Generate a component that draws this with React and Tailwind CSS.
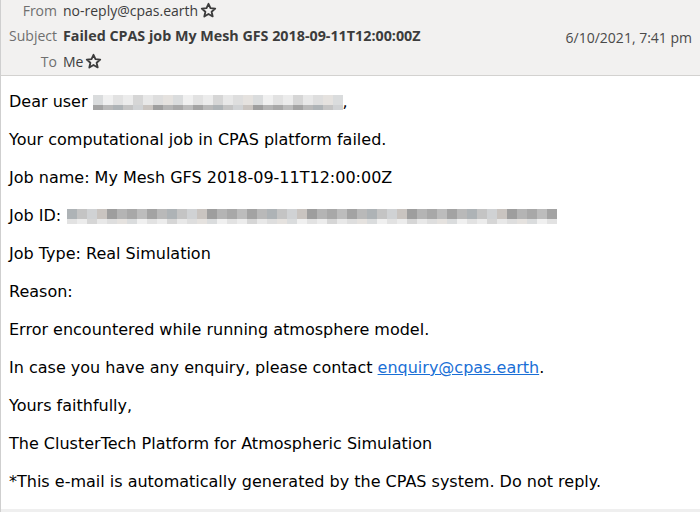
import React from "react";

// mosaic palette: class names written out in full
const dark = [
  "bg-[#b4b4b4]", "bg-[#a3a3a3]", "bg-[#c4c4c4]", "bg-[#9e9e9e]", "bg-[#bcbcbc]",
  "bg-[#aeb3b6]", "bg-[#c9c4c0]", "bg-[#a8a8a8]", "bg-[#b9b9b9]", "bg-[#d0d2d4]",
];
const light = [
  "bg-[#dedede]", "bg-[#e8e8e8]", "bg-[#d6d6d6]", "bg-[#ececec]", "bg-[#e2e2e2]",
  "bg-[#f0f0f0]", "bg-[#dadcdd]", "bg-[#e5e2df]",
];

function Mosaic({ cells, seed = 1, darkTop = true }) {
  const pick = (arr, i, k) => arr[(i * 7 + seed * 3 + k * 5) % arr.length];
  return (
    <span className="inline-flex flex-col align-middle">
      <span className="flex">
        {Array.from({ length: cells }).map((_, i) => (
          <span key={i} className={`w-[10px] h-[10px] ${darkTop ? pick(dark, i, 0) : pick(light, i, 0)}`} />
        ))}
      </span>
      <span className="flex">
        {Array.from({ length: cells }).map((_, i) => (
          <span key={i} className={`w-[10px] h-[5px] ${darkTop ? pick(light, i, 1) : pick(dark, i, 1)}`} />
        ))}
      </span>
    </span>
  );
}

function Star() {
  return (
    <svg width="17" height="17" viewBox="0 0 24 24" className="inline-block ml-[2px] -mt-[3px]">
      <path
        d="M12 2.5l2.8 6.2 6.7.6-5.1 4.5 1.5 6.6L12 17l-5.9 3.4 1.5-6.6-5.1-4.5 6.7-.6z"
        fill="none"
        stroke="#3c3c3c"
        strokeWidth="2.6"
        strokeLinejoin="round"
      />
    </svg>
  );
}

const lines = [
  "Your computational job in CPAS platform failed.",
  "Job name: My Mesh GFS 2018-09-11T12:00:00Z",
];

export default function App() {
  return (
    <div className="w-[700px] h-[512px] overflow-hidden bg-white border-l border-[#cfcfcf] flex flex-col">
      <div className="bg-[#f2f1f0] border-b border-[#d3d2d0] h-[76px] shrink-0 relative text-[14px] font-['Open_Sans',sans-serif] text-[#3c3c3c]">
        <div className="grid grid-cols-[56px_1fr] gap-x-[6px]">
          <div className="text-right text-[#6f6f6f] h-[22px] leading-[22px]">From</div>
          <div className="h-[22px] leading-[22px]">no-reply@cpas.earth<Star /></div>
          <div className="text-right text-[#6f6f6f] h-[27px] leading-[28px]">Subject</div>
          <div className="h-[27px] leading-[28px] font-bold text-[14.3px]">Failed CPAS job My Mesh GFS 2018-09-11T12:00:00Z</div>
          <div className="text-right text-[#6f6f6f] h-[26px] leading-[26px]">To</div>
          <div className="h-[26px] leading-[26px]">Me<Star /></div>
        </div>
        <div className="absolute right-[8px] top-[27px] leading-[22px] text-[#4a4a4a]">6/10/2021, 7:41 pm</div>
      </div>

      <div className="flex-1 pl-[8px] pt-[16px] flex flex-col gap-[19px] text-[16px] leading-[19px] text-black font-['DejaVu_Sans',sans-serif]">
        <div className="flex items-center">
          Dear user<span className="ml-[5px]"><Mosaic cells={25} seed={2} darkTop={false} /></span>,
        </div>
        {lines.map((t) => (
          <div key={t}>{t}</div>
        ))}
        <div className="flex items-center">
          Job ID:<span className="ml-[6px]"><Mosaic cells={49} seed={5} /></span>
        </div>
        <div>Job Type: Real Simulation</div>
        <div>Reason:</div>
        <div>Error encountered while running atmosphere model.</div>
        <div>
          In case you have any enquiry, please contact{" "}
          <a href="#" className="text-[#1a6fd6] underline">enquiry@cpas.earth</a>.
        </div>
        <div>Yours faithfully,</div>
        <div>The ClusterTech Platform for Atmospheric Simulation</div>
        <div>*This e-mail is automatically generated by the CPAS system. Do not reply.</div>
      </div>
      <div className="h-[3px] bg-[#efefef] shrink-0" />
    </div>
  );
}
